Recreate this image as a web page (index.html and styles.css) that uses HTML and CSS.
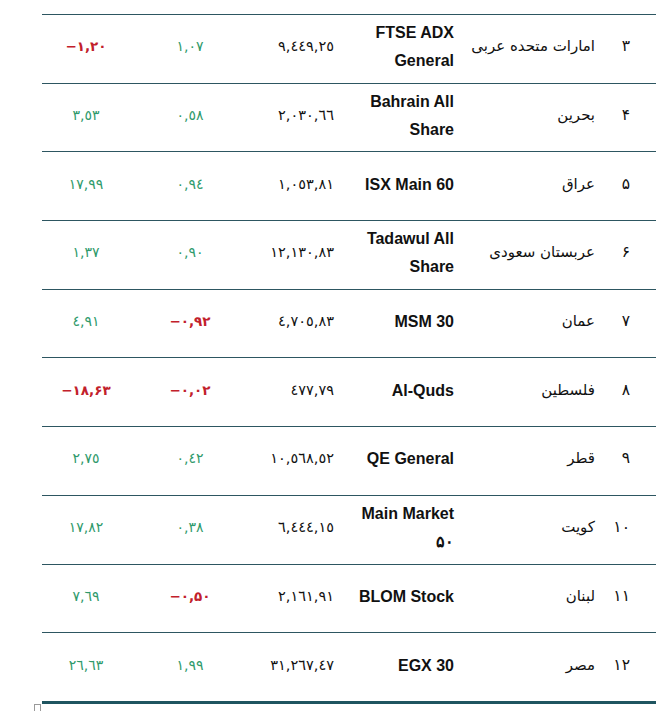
FILE: index.html
```html
<!DOCTYPE html>
<html lang="fa" dir="rtl">
<head>
<meta charset="utf-8">
<title>شاخص‌های بورس</title>
<link rel="stylesheet" href="styles.css">
</head>
<body>
<div class="page">
  <div class="table">
    <div class="row">
      <div class="cell num">۳</div>
      <div class="cell country">امارات متحده عربی</div>
      <div class="cell index">FTSE ADX General</div>
      <div class="cell value"><span dir="ltr">٩,٤٤٩,٢٥</span></div>
      <div class="cell change up"><span dir="ltr">١,٠٧</span></div>
      <div class="cell ytd down"><span dir="ltr">−۱,۲۰</span></div>
    </div>
    <div class="row">
      <div class="cell num">۴</div>
      <div class="cell country">بحرین</div>
      <div class="cell index">Bahrain All Share</div>
      <div class="cell value"><span dir="ltr">٢,٠٣٠,٦٦</span></div>
      <div class="cell change up"><span dir="ltr">٠,٥٨</span></div>
      <div class="cell ytd up"><span dir="ltr">٣,٥٣</span></div>
    </div>
    <div class="row">
      <div class="cell num">۵</div>
      <div class="cell country">عراق</div>
      <div class="cell index">ISX Main 60</div>
      <div class="cell value"><span dir="ltr">١,٠٥٣,٨١</span></div>
      <div class="cell change up"><span dir="ltr">٠,٩٤</span></div>
      <div class="cell ytd up"><span dir="ltr">١٧,٩٩</span></div>
    </div>
    <div class="row">
      <div class="cell num">۶</div>
      <div class="cell country">عربستان سعودی</div>
      <div class="cell index">Tadawul All Share</div>
      <div class="cell value"><span dir="ltr">١٢,١٣٠,٨٣</span></div>
      <div class="cell change up"><span dir="ltr">٠,٩٠</span></div>
      <div class="cell ytd up"><span dir="ltr">١,٣٧</span></div>
    </div>
    <div class="row">
      <div class="cell num">۷</div>
      <div class="cell country">عمان</div>
      <div class="cell index">MSM 30</div>
      <div class="cell value"><span dir="ltr">٤,٧٠٥,٨٣</span></div>
      <div class="cell change down"><span dir="ltr">−۰,۹۲</span></div>
      <div class="cell ytd up"><span dir="ltr">٤,٩١</span></div>
    </div>
    <div class="row">
      <div class="cell num">۸</div>
      <div class="cell country">فلسطین</div>
      <div class="cell index">Al-Quds</div>
      <div class="cell value"><span dir="ltr">٤٧٧,٧٩</span></div>
      <div class="cell change down"><span dir="ltr">−۰,۰۲</span></div>
      <div class="cell ytd down"><span dir="ltr">−۱۸,۶۳</span></div>
    </div>
    <div class="row">
      <div class="cell num">۹</div>
      <div class="cell country">قطر</div>
      <div class="cell index">QE General</div>
      <div class="cell value"><span dir="ltr">١٠,٥٦٨,٥٢</span></div>
      <div class="cell change up"><span dir="ltr">٠,٤٢</span></div>
      <div class="cell ytd up"><span dir="ltr">٢,٧٥</span></div>
    </div>
    <div class="row">
      <div class="cell num">۱۰</div>
      <div class="cell country">کویت</div>
      <div class="cell index">Main Market ۵۰</div>
      <div class="cell value"><span dir="ltr">٦,٤٤٤,١٥</span></div>
      <div class="cell change up"><span dir="ltr">٠,٣٨</span></div>
      <div class="cell ytd up"><span dir="ltr">١٧,٨٢</span></div>
    </div>
    <div class="row">
      <div class="cell num">۱۱</div>
      <div class="cell country">لبنان</div>
      <div class="cell index">BLOM Stock</div>
      <div class="cell value"><span dir="ltr">٢,١٦١,٩١</span></div>
      <div class="cell change down"><span dir="ltr">−۰,۵۰</span></div>
      <div class="cell ytd up"><span dir="ltr">٧,٦٩</span></div>
    </div>
    <div class="row last">
      <div class="cell num">۱۲</div>
      <div class="cell country">مصر</div>
      <div class="cell index">EGX 30</div>
      <div class="cell value"><span dir="ltr">٣١,٢٦٧,٤٧</span></div>
      <div class="cell change up"><span dir="ltr">١,٩٩</span></div>
      <div class="cell ytd up"><span dir="ltr">٢٦,٦٣</span></div>
    </div>
  </div>
  <div class="handle"></div>
</div>
</body>
</html>
```
FILE: styles.css
```css
html, body {
  margin: 0;
  padding: 0;
  background: #ffffff;
}
body {
  font-family: "DejaVu Sans", "Liberation Sans", sans-serif;
  color: #111;
  overflow: hidden;
}
.page {
  position: relative;
  width: 666px;
  height: 711px;
  padding: 14px 10px 0 42px;
  box-sizing: border-box;
  direction: ltr;
}
.table {
  width: 614px;
  direction: rtl;
}
.row {
  display: grid;
  grid-template-columns: 56px 136px 120px 94px 120px 88px;
  height: 68.7px;
  box-sizing: border-box;
  border-top: 1px solid #2d5661;
}
.row.last {
  height: 71.7px;
  border-bottom: 3px solid #1f5560;
}
.cell {
  display: flex;
  align-items: center;
  justify-content: flex-start;
  text-align: right;
  padding-bottom: 5px;
  box-sizing: border-box;
}
.num {
  padding-right: 26px;
  font-family: "DejaVu Sans", sans-serif;
  font-size: 15.5px;
}
.country {
  padding-right: 5px;
  font-family: "DejaVu Sans", sans-serif;
  font-size: 15px;
}
.index {
  padding-right: 10px;
  padding-left: 6px;
  padding-bottom: 3px;
  font-family: "Liberation Sans", Arial, sans-serif;
  font-weight: bold;
  font-size: 16px;
  line-height: 28px;
}
.value {
  padding-right: 10px;
  font-family: "DejaVu Sans", sans-serif;
  font-size: 14.5px;
}
.change, .ytd {
  justify-content: center;
  font-family: "DejaVu Sans", sans-serif;
  font-size: 14px;
}
.up {
  color: #2f9a6b;
}
.down {
  color: #c2202b;
  font-weight: bold;
  font-size: 13.5px;
}
.handle {
  position: absolute;
  left: 34px;
  top: 704px;
  width: 7px;
  height: 8px;
  border: 1px solid #9a9a9a;
  box-sizing: border-box;
}
```
